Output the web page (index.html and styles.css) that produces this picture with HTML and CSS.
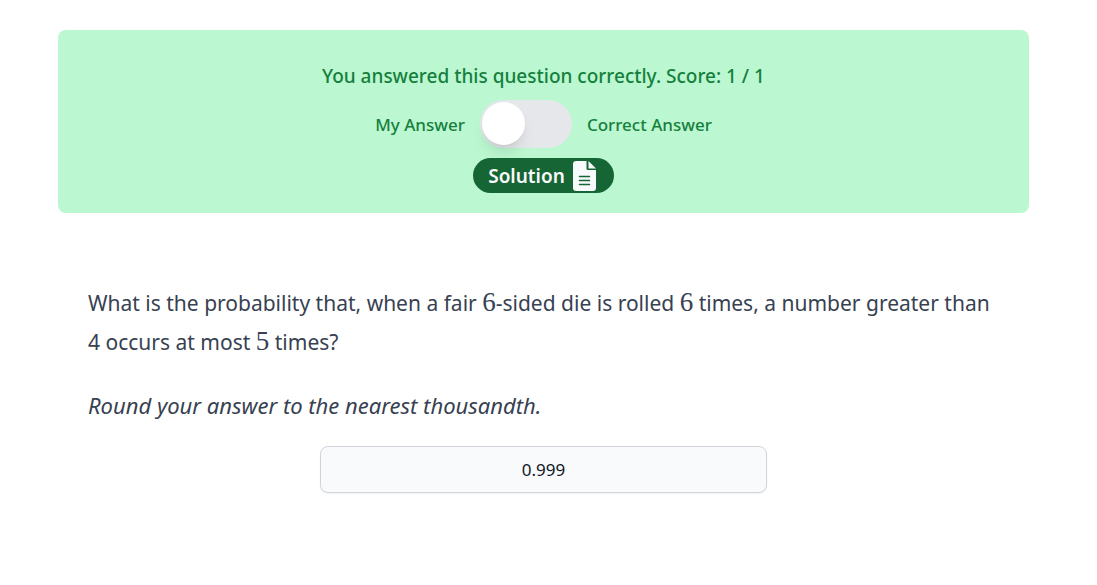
FILE: index.html
```html
<!DOCTYPE html>
<html lang="en">
<head>
  <meta charset="UTF-8">
  <meta name="viewport" content="width=device-width, initial-scale=1">
  <title>Question</title>
  <link rel="stylesheet" href="styles.css">
</head>
<body>

  <section class="result">
    <p class="score">You answered this question correctly. Score: 1 / 1</p>

    <label class="answer-switch">
      <span>My Answer</span>
      <input type="checkbox" class="toggle">
      <span>Correct Answer</span>
    </label>

    <button type="button" class="solution">
      Solution
      <svg class="doc-icon" viewBox="0 0 23 30" aria-hidden="true">
        <path fill="#f9fafb" d="M3 0H13.5V7.5Q13.5 9 15 9H23V27Q23 30 20 30H3Q0 30 0 27V3Q0 0 3 0Z"/>
        <path fill="#f9fafb" d="M15.5 0L23 7.5H15.5Z"/>
        <path stroke="#166534" stroke-width="1.5" stroke-linecap="round" d="M6.5 15.5H16.5M6.5 19.5H16.5M6.5 23.5H16.5"/>
      </svg>
    </button>
  </section>

  <main class="question">
    <p>What is the probability that, when a fair <span class="math">6</span>-sided die is rolled <span class="math">6</span> times, a number greater than 4 occurs at most <span class="math">5</span> times?</p>
    <p class="hint"><em id="hint">Round your answer to the nearest thousandth.</em></p>
    <input type="text" class="answer" value="0.999" aria-labelledby="hint" readonly>
  </main>

</body>
</html>
```
FILE: styles.css
```css
* {
  box-sizing: border-box;
}

body {
  margin: 0;
  padding: 30px 68px 30px 58px;
  background: #fff;
  color: #374151;
  font-family: "Segoe UI", "Noto Sans", sans-serif;
}

p {
  margin: 0;
}

/* Result banner */
.result {
  display: flex;
  flex-direction: column;
  align-items: center;
  gap: 10px;
  padding: 32px 20px 20px;
  background: #bbf7d0;
  border-radius: 8px;
  color: #15803d;
}

.score {
  font-size: 19px;
  font-weight: 500;
  line-height: 28px;
}

.answer-switch {
  display: flex;
  align-items: center;
  gap: 15px;
  font-size: 17px;
  font-weight: 500;
  cursor: pointer;
}

.toggle {
  appearance: none;
  display: flex;
  align-items: center;
  width: 92px;
  height: 48px;
  margin: 0;
  padding: 0 2px 1px;
  background: #e5e7eb;
  border-radius: 24px;
  cursor: pointer;
}

.toggle::before {
  content: "";
  width: 43px;
  height: 43px;
  background: #fff;
  border-radius: 50%;
  box-shadow: 0 10px 15px -3px rgba(0, 0, 0, 0.1), 0 4px 6px -4px rgba(0, 0, 0, 0.1);
}

.toggle:checked::before {
  margin-left: 45px;
}

.solution {
  display: flex;
  align-items: center;
  gap: 8px;
  height: 35px;
  padding: 0 18px 0 15px;
  border: 0;
  border-radius: 18px;
  background: #166534;
  color: #f9fafb;
  font-family: inherit;
  font-size: 19px;
  font-weight: 600;
  cursor: pointer;
}

.doc-icon {
  width: 23px;
  height: 30px;
}

/* Question */
.question {
  display: flex;
  flex-direction: column;
  padding: 71px 30px 30px;
  font-size: 21px;
  line-height: 39px;
}

.hint {
  margin-top: 24px;
  font-size: 22px;
}

.math {
  font-family: "Liberation Serif", serif;
  font-size: 27px;
  line-height: 1;
}

.answer {
  align-self: center;
  width: 49%;
  height: 47px;
  margin-top: 21px;
  border: 1px solid #d1d5db;
  border-radius: 8px;
  background: #f9fafb;
  box-shadow: 0 1px 2px rgba(0, 0, 0, 0.05);
  color: #111827;
  font-family: inherit;
  font-size: 17px;
  text-align: center;
}
```
